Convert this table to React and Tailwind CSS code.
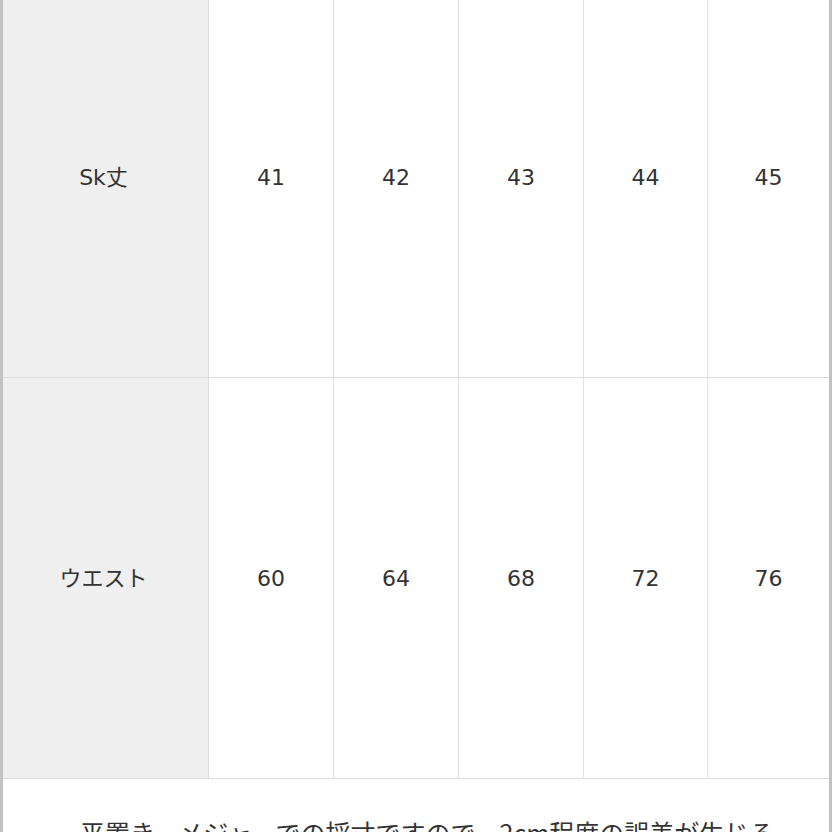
import React from "react";

const rows = [
  { label: "Sk丈", values: ["41", "42", "43", "44", "45"] },
  { label: "ウエスト", values: ["60", "64", "68", "72", "76"] },
];

export default function App() {
  return (
    <div
      className="w-[832px] h-[832px] overflow-hidden bg-white border-l-[3px] border-r-[3px] border-[#c2c2c2]"
      style={{ fontFamily: '"DejaVu Sans", "Noto Sans CJK JP", sans-serif' }}
    >
      <div className="-mt-[23px]">
        {rows.map((r) => (
          <div
            key={r.label}
            className="grid grid-cols-[206px_125px_125px_125px_124px_1fr] h-[401px] border-b border-[#dcdcdc] text-[22px] text-[#333]"
          >
            <div className="flex items-center justify-center bg-[#efefef] border-r border-[#dcdcdc] pr-[4px]">
              {r.label}
            </div>
            {r.values.map((v, i) => (
              <div
                key={i}
                className={
                  "flex items-center justify-center " +
                  (i < 4 ? "border-r border-[#e2e2e2]" : "")
                }
              >
                {v}
              </div>
            ))}
          </div>
        ))}
      </div>
      <div
        className="pt-[41px] pl-[77px] text-[25px] leading-none text-[#333] whitespace-nowrap"
        style={{ fontFamily: '"Noto Sans CJK JP", sans-serif' }}
      >
        平置き、メジャーでの採寸ですので、2cm程度の誤差が生じる
      </div>
    </div>
  );
}
